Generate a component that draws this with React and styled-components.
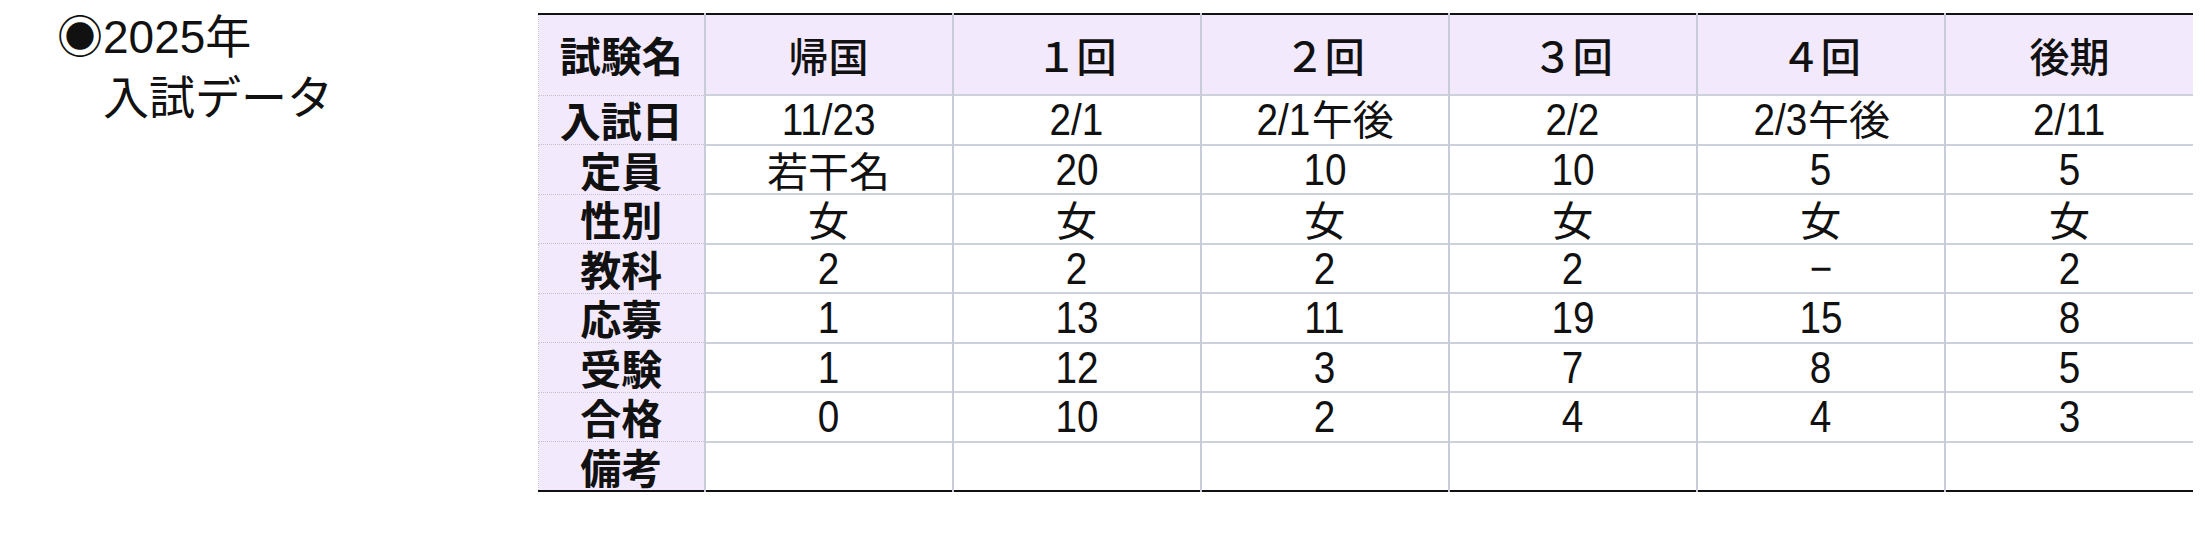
import styled, { createGlobalStyle } from 'styled-components';

const GlobalStyle = createGlobalStyle`
    body {
        margin: 0;
        background: #ffffff;
        font-family: "Liberation Sans", "Noto Sans CJK JP", sans-serif;
        color: #111111;
    }
`

const Page = styled.div`
    display: flex;
    align-items: flex-start;
    width: 2210px;
    height: 560px;
    padding-top: 13px;
    box-sizing: border-box;
`
const Heading = styled.div`
    width: 538px;
    flex-shrink: 0;
    padding-left: 57px;
    box-sizing: border-box;
    font-size: 46px;
    line-height: 61px;
    margin-top: -6px;
    font-family: "Liberation Sans", "Noto Sans CJK JP", sans-serif;
    white-space: pre;
`
const Table = styled.table`
    border-collapse: collapse;
    table-layout: fixed;
    width: 1655px;
    border-top: 2px solid #111111;
    border-bottom: 2px solid #111111;
    font-family: "Noto Sans CJK JP", sans-serif;
`
const Row = styled.tr`
    height: ${(p) => (p.$head ? '81px' : '49.5px')};
`
const Label = styled.th`
    background: #f2eafc;
    font-size: 41px;
    font-weight: 700;
    line-height: 1;
    padding: 0;
    text-align: center;
    border-top: 1px dotted #c3c3cc;
    border-left: 1px dotted #c8c8d0;
    border-right: 2px solid #c7ccd8;
`
const HeadCell = styled.th`
    background: #f2eafc;
    font-size: 40px;
    font-weight: 500;
    line-height: 1;
    padding: 0;
    text-align: center;
    border-left: 2px solid #c7ccd8;
`
const Cell = styled.td`
    font-size: 41px;
    line-height: 1;
    padding: 0;
    text-align: center;
    border-top: 2px solid #cdd1dc;
    border-left: 2px solid #c7ccd8;
`
const Narrow = styled.span`
    display: inline-block;
    font-family: "Liberation Sans", "Noto Sans CJK JP", sans-serif;
    font-size: 45px;
    transform: scaleX(0.86);
    margin: 0 -0.07em;
`

const heads = ['帰国', '１回', '２回', '３回', '４回', '後期'];

const rows = [
    ['入試日', ['11/23', '2/1', '2/1午後', '2/2', '2/3午後', '2/11']],
    ['定員', ['若干名', '20', '10', '10', '5', '5']],
    ['性別', ['女', '女', '女', '女', '女', '女']],
    ['教科', ['2', '2', '2', '2', '−', '2']],
    ['応募', ['1', '13', '11', '19', '15', '8']],
    ['受験', ['1', '12', '3', '7', '8', '5']],
    ['合格', ['0', '10', '2', '4', '4', '3']],
    ['備考', ['', '', '', '', '', '']],
];

// 数字は細めに、漢字はゴシックのまま
const Value = ({ text }) => {
    const parts = text.match(/[0-9/−]+|[^0-9/−]+/g) || [];
    return parts.map((part, i) =>
        /[0-9/−]/.test(part) ? <Narrow key={i}>{part}</Narrow> : <span key={i}>{part}</span>
    );
};

const App = () => {
    return (
        <>
            <GlobalStyle />
            <Page>
                <Heading>{'◉2025年\n　入試データ'}</Heading>
                <Table>
                    <colgroup>
                        <col style={{ width: '166px' }} />
                        {heads.map((h) => (
                            <col key={h} />
                        ))}
                    </colgroup>
                    <tbody>
                        <Row $head>
                            <Label>試験名</Label>
                            {heads.map((h) => (
                                <HeadCell key={h}>{h}</HeadCell>
                            ))}
                        </Row>
                        {rows.map(([label, values]) => (
                            <Row key={label}>
                                <Label>{label}</Label>
                                {values.map((v, i) => (
                                    <Cell key={i}>
                                        <Value text={v} />
                                    </Cell>
                                ))}
                            </Row>
                        ))}
                    </tbody>
                </Table>
            </Page>
        </>
    );
};

export default App;
